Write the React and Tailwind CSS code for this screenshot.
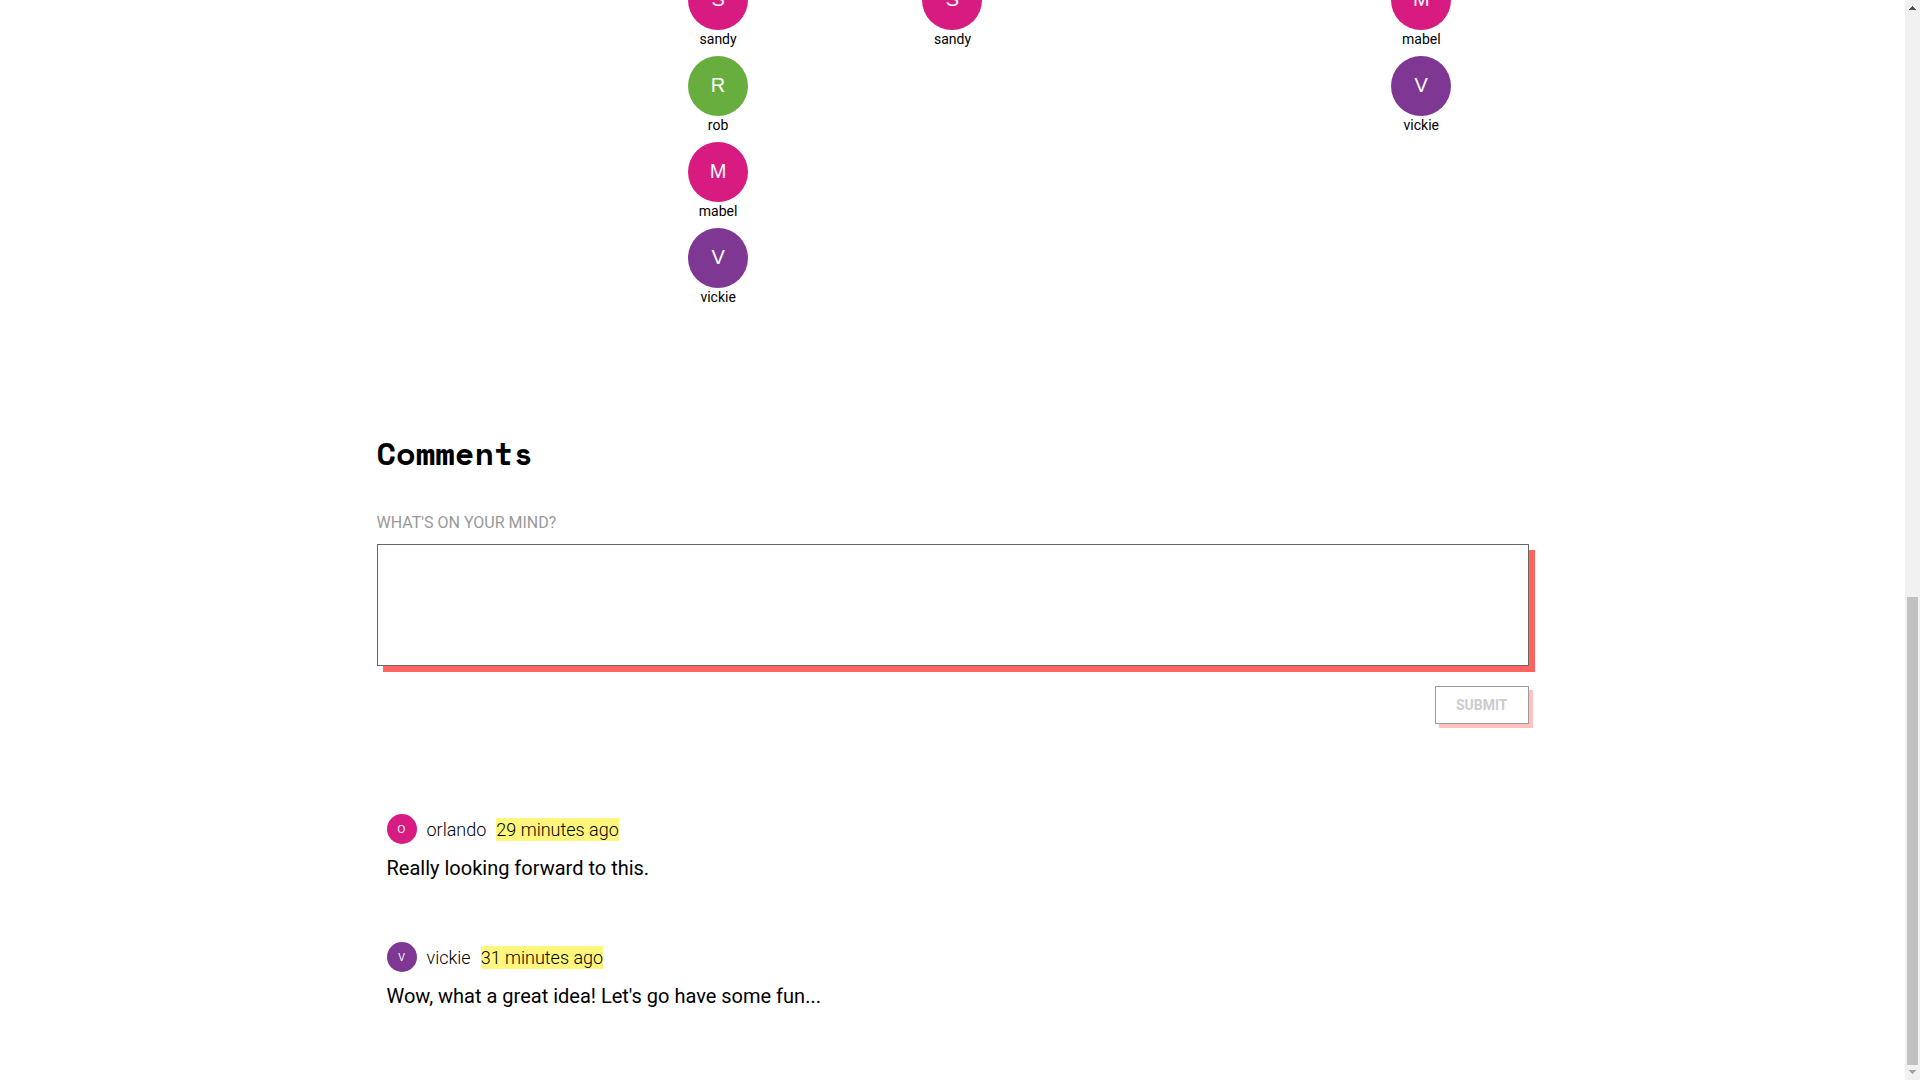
import React, { useState } from 'react';

const COLORS = {
    sandy: 'bg-[#d81b80]',
    rob: 'bg-[#68ae3f]',
    mabel: 'bg-[#d81b80]',
    vickie: 'bg-[#7e3792]',
    orlando: 'bg-[#d81b80]'
};

// people available on each day, one list per column
const columns = [
    [],
    ['sandy', 'rob', 'mabel', 'vickie'],
    ['sandy'],
    [],
    ['mabel', 'vickie']
];

const comments = [
    { id: 1, author: 'orlando', time: '29 minutes ago', text: 'Really looking forward to this.' },
    { id: 2, author: 'vickie', time: '31 minutes ago', text: "Wow, what a great idea! Let's go have some fun..." }
];

const Avatar = ({ name, small }) => (
    <span
        className={`flex shrink-0 items-center justify-center rounded-full text-white font-['Liberation_Sans',sans-serif] ${COLORS[name]} ${
            small ? 'size-[30px] text-[10px]' : 'size-[60px] pb-0.5 text-xl'
        }`}
    >
        {name[0].toUpperCase()}
    </span>
);

const Person = ({ name }) => (
    <li className="flex h-[86px] flex-col items-center">
        <Avatar name={name} />
        <span className="text-sm leading-[18px]">{name}</span>
    </li>
);

const Comment = ({ author, time, text }) => (
    <article className="h-32 px-2.5">
        <div className="flex items-center gap-2.5 text-lg leading-[23px] font-light">
            <Avatar name={author} small />
            <span>{author}</span>
            <time className="bg-[#fff77d]">{time}</time>
        </div>
        <p className="mt-[9px] text-xl leading-[30px]">{text}</p>
    </article>
);

const Scrollbar = () => (
    <div className="flex w-[15px] shrink-0 flex-col items-center bg-[#f1f1f1]" aria-hidden="true">
        <svg className="h-[15px] w-[15px] shrink-0" viewBox="0 0 15 15" shapeRendering="crispEdges">
            <path d="M7 6h1v1h1v1h1v1h1v1H4V9h1V8h1V7h1z" fill="#505050" />
        </svg>
        <div className="grow-[582]"></div>
        <div className="w-[11px] grow-[468] bg-[#c1c1c1]"></div>
        <svg className="h-[15px] w-[15px] shrink-0" viewBox="0 0 15 15" shapeRendering="crispEdges">
            <path d="M4 5h7v1h-1v1H9v1H8v1H7V8H6V7H5V6H4z" fill="#a3a3a3" />
        </svg>
    </div>
);

const App = () => {
    const [message, setMessage] = useState('');

    return (
        <div className="flex h-screen overflow-hidden bg-white text-black font-['Roboto',sans-serif]">
            <main className="min-w-0 flex-1">
                <div className="mx-auto max-w-6xl">
                    {/* Availability */}
                    <section className="-mt-[30px] grid grid-cols-5 gap-5">
                        {columns.map((people, idx) => (
                            <ul key={idx}>
                                {people.map((name) => (
                                    <Person key={name} name={name} />
                                ))}
                            </ul>
                        ))}
                    </section>

                    {/* Comment form */}
                    <section className="mt-[115px]">
                        <h2 className="text-[32px] leading-[48px] font-bold font-['Space_Mono','DejaVu_Sans_Mono',monospace]">Comments</h2>
                        <form className="mt-[34px] flex flex-col" onSubmit={(e) => e.preventDefault()}>
                            <label htmlFor="message" className="text-base text-[#999999] uppercase">What's on your mind?</label>
                            <textarea
                                id="message"
                                value={message}
                                onChange={(e) => setMessage(e.target.value)}
                                className="mt-[9px] h-[122px] w-full resize-none border border-[#666666] bg-white p-2.5 shadow-[6px_6px_0_#ff6460] outline-none"
                            />
                            <button
                                type="submit"
                                disabled={!message}
                                className="mt-5 h-[38px] self-end border border-[#999999] bg-white px-5 text-sm font-bold text-[#cccccc] uppercase shadow-[4px_4px_0_#ffc1bf]"
                            >
                                Submit
                            </button>
                        </form>
                    </section>

                    {/* Comment list */}
                    <section className="mt-[90px]">
                        {comments.map((comment) => (
                            <Comment key={comment.id} {...comment} />
                        ))}
                    </section>
                </div>
            </main>
            <Scrollbar />
        </div>
    );
};

export default App;
